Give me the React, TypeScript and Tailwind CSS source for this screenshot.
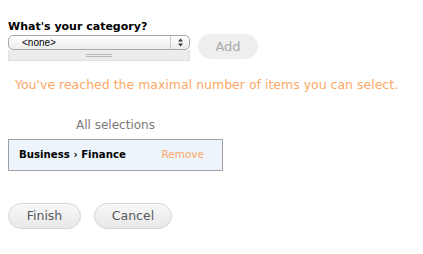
import React from "react";

export default function App() {
  return (
    <div className="w-[423px] h-[254px] bg-white pl-2 pt-[20px]" style={{ fontFamily: '"DejaVu Sans", Verdana, sans-serif' }}>
      <div className="text-[11px] font-bold text-black leading-[14px]">What's your category?</div>
      <div className="flex items-start mt-[1px]">
        <div className="w-[182px] flex flex-col">
          <div className="h-[15px] rounded-[5px] border border-[#a8a8a8] bg-gradient-to-b from-[#ffffff] to-[#ececec] flex items-center pl-[13px] pr-[4px] relative">
            <span className="text-[10px] text-black leading-none" style={{ fontFamily: '"Liberation Sans", Arial, sans-serif' }}>&lt;none&gt;</span>
            <div className="absolute right-[18px] top-0 bottom-0 w-px bg-[#c8c8c8]" />
            <svg className="absolute right-[5px] top-[2px]" width="7" height="9" viewBox="0 0 7 9">
              <path d="M3.5 0.5 L6 3.5 H1 Z" fill="#333" />
              <path d="M3.5 8.5 L6 5.5 H1 Z" fill="#333" />
            </svg>
          </div>
          <div className="h-[11px] bg-[#ececec] border border-[#e0e0e0] border-t-0 flex items-center justify-center">
            <div className="flex flex-col gap-[1px]">
              <div className="w-[26px] h-px bg-[#b8b8b8]" />
              <div className="w-[26px] h-px bg-[#b8b8b8]" />
            </div>
          </div>
        </div>
        <div className="ml-[8px] -mt-[1px] w-[60px] h-[25px] rounded-full bg-[#eeeeee] flex items-center justify-center text-[13px] text-[#aaaaaa]">
          Add
        </div>
      </div>
      <div className="mt-[16px] pl-[7px] text-[12.5px] text-[#fba867] leading-[15px]">
        You've reached the maximal number of items you can select.
      </div>
      <div className="mt-[26px] w-[215px] text-center text-[12px] text-[#7a7a7a] leading-[14px]">All selections</div>
      <div className="mt-[7px] w-[215px] h-[32px] border border-[#a0a0a0] bg-[#edf4fb] flex items-center pl-[10px] pr-[18px] justify-between">
        <span className="text-[10.2px] font-bold text-black">Business › Finance</span>
        <span className="text-[10.5px] text-[#fba867]">Remove</span>
      </div>
      <div className="flex gap-[13px] mt-[32px]">
        <div className="w-[73px] h-[26px] rounded-full border border-[#d6d6d6] bg-gradient-to-b from-[#f8f8f8] to-[#e8e8e8] flex items-center justify-center text-[12.5px] text-[#555a60]">Finish</div>
        <div className="w-[78px] h-[26px] rounded-full border border-[#d6d6d6] bg-gradient-to-b from-[#f8f8f8] to-[#e8e8e8] flex items-center justify-center text-[12.5px] text-[#555a60]">Cancel</div>
      </div>
    </div>
  );
}
